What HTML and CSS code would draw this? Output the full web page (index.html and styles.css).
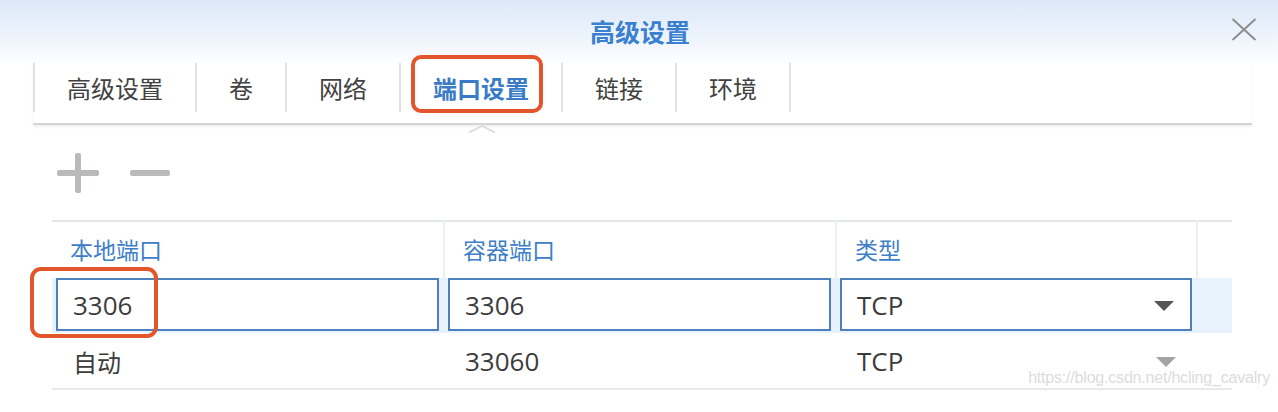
FILE: index.html
```html
<!DOCTYPE html>
<html lang="zh-CN">
<head>
<meta charset="utf-8">
<title>高级设置</title>
<link rel="stylesheet" href="styles.css">
</head>
<body>
<div class="dialog">
  <header class="head">
    <div></div>
    <h1 class="title">高级设置</h1>
    <button class="close" aria-label="关闭">
      <svg width="26" height="23" viewBox="0 0 26 23"><path d="M1.5 1 L24.5 22 M24.5 1 L1.5 22" stroke="#8e8e8e" stroke-width="2" fill="none"/></svg>
    </button>
  </header>

  <nav class="tabbar">
    <div class="tabs">
      <div class="tab">高级设置</div>
      <div class="tab">卷</div>
      <div class="tab">网络</div>
      <div class="tab active">端口设置
        <svg class="notch" width="26" height="10" viewBox="0 0 26 10"><path d="M0 8.5 L13 2 L26 8.5 L26 10 L0 10 Z" fill="#fff"/><path d="M0 8.5 L13 2 L26 8.5" stroke="#dadada" stroke-width="1.6" fill="none"/></svg>
      </div>
      <div class="tab">链接</div>
      <div class="tab last">环境</div>
    </div>
  </nav>

  <div class="toolbar">
    <svg width="44" height="42" viewBox="0 0 44 42"><rect x="1" y="18" width="42" height="6" rx="2" fill="#b9babb"/><rect x="19" y="1" width="6" height="40" rx="2" fill="#b9babb"/></svg>
    <svg width="42" height="42" viewBox="0 0 42 42"><rect x="1" y="18" width="40" height="6" rx="2" fill="#b9babb"/></svg>
  </div>

  <div class="grid">
    <div class="th">本地端口</div>
    <div class="th">容器端口</div>
    <div class="th">类型</div>
    <div class="th end"></div>

    <div class="td sel first">
      <div class="field">3306</div>
      <span class="mark"></span>
    </div>
    <div class="td sel"><div class="field">3306</div></div>
    <div class="td sel"><div class="field select">TCP<span class="caret dark"></span></div></div>
    <div class="td sel"></div>

    <div class="td plain">自动</div>
    <div class="td plain">33060</div>
    <div class="td plain select2">TCP<span class="caret light"></span></div>
    <div class="td plain"></div>
  </div>
</div>
<div class="watermark">https://blog.csdn.net/hcling_cavalry</div>
</body>
</html>
```

FILE: styles.css
```css
html, body {
  margin: 0;
  padding: 0;
  background: #ffffff;
}
body {
  font-family: "Noto Sans CJK SC", "Noto Sans", sans-serif;
  color: #3d3d3d;
  width: 1278px;
  height: 412px;
  overflow: hidden;
  position: relative;
}
.dialog {
  width: 1278px;
}
.head {
  height: 63px;
  display: grid;
  grid-template-columns: 1fr auto 1fr;
  align-items: center;
  background: linear-gradient(180deg, #dce8f7 0%, #e9f1fb 45%, #fdfeff 100%);
}
.title {
  margin: 0 0 2px 2px;
  font-size: 25px;
  font-weight: 700;
  color: #3a80d0;
  line-height: 30px;
}
.close {
  justify-self: end;
  margin: 0 21px 5px 0;
  padding: 0;
  border: 0;
  background: transparent;
  width: 26px;
  height: 23px;
  display: flex;
}
.tabbar {
  margin: 0 26px 0 33px;
  padding-bottom: 11px;
  border-bottom: 2px solid #d6d6d6;
  box-shadow: 0 2px 2px rgba(0, 0, 0, 0.06);
}
.tabs {
  display: flex;
  height: 49px;
}
.tab {
  position: relative;
  display: flex;
  align-items: center;
  padding: 0 32px;
  border-left: 2px solid #e1e1e1;
  font-size: 24px;
  line-height: 30px;
  color: #414141;
  white-space: nowrap;
}
.tab.last {
  border-right: 2px solid #e1e1e1;
}
.tab.active {
  color: #3a7bc8;
  font-weight: 700;
}
.tab.active::before {
  content: "";
  position: absolute;
  left: 10px;
  right: 18px;
  top: -8px;
  bottom: -1px;
  border: 4px solid #e3552b;
  border-radius: 10px;
}
.notch {
  position: absolute;
  left: 68px;
  bottom: -22px;
}
.toolbar {
  height: 95px;
  display: flex;
  align-items: center;
  gap: 29px;
  padding: 0 0 0 56px;
}
.grid {
  margin-left: 52px;
  width: 1180px;
  display: grid;
  grid-template-columns: 393px 392px 361px 34px;
  grid-template-rows: 56px 55px 55px;
  border-top: 2px solid #e3e6ea;
  border-bottom: 2px solid #e7e9eb;
  box-sizing: border-box;
}
.th {
  display: flex;
  align-items: center;
  padding-left: 18px;
  font-size: 23px;
  color: #3e80c8;
  border-right: 2px solid #eceff2;
  margin-top: -2px;
}
.th.end {
  border-right: 0;
}
.td {
  display: flex;
  align-items: center;
  box-sizing: border-box;
}
.td.sel {
  background: #e8f2fc;
  padding: 0 6px 2px 3px;
  position: relative;
}
.td.sel.first {
  padding-left: 4px;
}
.field {
  flex: 1;
  height: 53px;
  box-sizing: border-box;
  border: 2px solid #4c80bf;
  background: #ffffff;
  display: flex;
  align-items: center;
  padding: 0 15px;
  font-family: "Open Sans", "Noto Sans CJK SC", sans-serif;
  font-size: 26px;
  color: #3c3c3c;
}
.field.select {
  justify-content: space-between;
  padding-right: 16px;
}
.td.plain {
  padding-left: 21px;
  font-family: "Open Sans", "Noto Sans CJK SC", sans-serif;
  font-size: 26px;
  color: #3c3c3c;
  padding-top: 1px;
}
.td.plain:first-child,
.td.plain:nth-child(9) {
  font-size: 24px;
}
.td.plain + .td.plain {
  padding-left: 20px;
}
.td.select2 {
  justify-content: space-between;
  padding-right: 22px;
}
.caret {
  width: 0;
  height: 0;
  border-left: 10px solid transparent;
  border-right: 10px solid transparent;
  border-top: 10px solid #555;
  margin-top: 2px;
}
.caret.light {
  border-top-color: #a4a4a8;
}
.mark {
  position: absolute;
  left: -22px;
  top: -11px;
  width: 128px;
  height: 71px;
  box-sizing: border-box;
  border: 4px solid #e3552b;
  border-radius: 11px;
}
.watermark {
  position: absolute;
  right: 8px;
  top: 369px;
  font-family: "Liberation Sans", sans-serif;
  font-size: 16px;
  letter-spacing: -0.2px;
  color: #dcdcdc;
}
```
